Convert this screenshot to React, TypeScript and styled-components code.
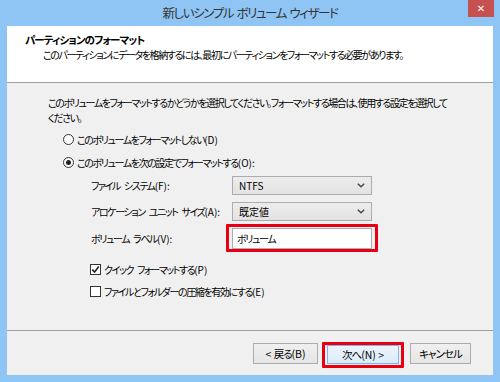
import React from 'react'
import styled, { createGlobalStyle } from 'styled-components'

const GlobalStyle = createGlobalStyle`
  html, body {
    margin: 0;
    padding: 0;
    background: #8fc5f4;
  }
  body {
    font-family: "Noto Sans CJK JP", "Noto Sans", sans-serif;
    font-feature-settings: "palt";
    font-size: 10px;
    letter-spacing: -1.4px;
    word-spacing: 3px;
    color: #000;
  }
`

const frameBlue = '#8fc5f4'

const ChevronIcon = () => (
  <svg width="8" height="5" viewBox="0 0 8 5">
    <path d="M0.8 0.8 L4 3.8 L7.2 0.8" fill="none" stroke="#444" strokeWidth="1.4" />
  </svg>
)

const CheckIcon = () => (
  <svg width="9" height="9" viewBox="0 0 9 9">
    <path d="M1.2 4.6 L3.6 7 L7.8 1.6" fill="none" stroke="#222" strokeWidth="1.6" />
  </svg>
)

const App: React.FC = () => {
  return (
    <>
      <GlobalStyle />
      <SWindow>
        <STitleBar>
          <span />
          <STitle>新しいシンプル ボリューム ウィザード</STitle>
          <SClose aria-label="閉じる">✕</SClose>
        </STitleBar>
        <SPanel>
          <SHeader>
            <h1 className="heading">パーティションのフォーマット</h1>
            <p className="sub">
              このパーティションにデータを格納するには、最初にパーティションをフォーマットする必要があります。
            </p>
          </SHeader>
          <SBody>
            <SIntro>
              このボリュームをフォーマットするかどうかを選択してください。フォーマットする場合は、使用する設定を選択して
              <br />
              ください。
            </SIntro>
            <SOption $gap={6}>
              <SRadio />
              <span>
                このボリュームをフォーマットしない<SKey>(D)</SKey>
              </span>
            </SOption>
            <SOption $gap={7}>
              <SRadio $checked />
              <span>
                このボリュームを次の設定でフォーマットする<SKey>(O):</SKey>
              </span>
            </SOption>
            <SField $gap={6}>
              <SLabel>
                ファイル システム<SKey>(F):</SKey>
              </SLabel>
              <SSelect>
                NTFS
                <ChevronIcon />
              </SSelect>
            </SField>
            <SField $gap={7}>
              <SLabel>
                アロケーション ユニット サイズ<SKey>(A):</SKey>
              </SLabel>
              <SSelect>
                既定値
                <ChevronIcon />
              </SSelect>
            </SField>
            <SField $gap={3}>
              <SLabel>
                ボリューム ラベル<SKey>(V):</SKey>
              </SLabel>
              <SMarkField>
                <SInput>ボリューム</SInput>
              </SMarkField>
            </SField>
            <SCheckRow $gap={9}>
              <SCheckBox>
                <CheckIcon />
              </SCheckBox>
              <span>
                クイック フォーマットする<SKey>(P)</SKey>
              </span>
            </SCheckRow>
            <SCheckRow $gap={6}>
              <SCheckBox />
              <span>
                ファイルとフォルダーの圧縮を有効にする<SKey>(E)</SKey>
              </span>
            </SCheckRow>
          </SBody>
          <SFooter>
            <SButton $width={65}>
              <SKey>&lt; </SKey>戻る<SKey>(B)</SKey>
            </SButton>
            <SMarkButton>
              <SButton $width={72} $primary $short>
                次へ<SKey>(N) &gt;</SKey>
              </SButton>
            </SMarkButton>
            <SButton $width={61}>キャンセル</SButton>
          </SFooter>
        </SPanel>
      </SWindow>
    </>
  )
}

const SWindow = styled.div`
  display: flex;
  flex-direction: column;
  width: 500px;
  height: 382px;
  background: ${frameBlue};
  box-sizing: border-box;
`

const STitleBar = styled.div`
  display: grid;
  grid-template-columns: 1fr auto 1fr;
  align-items: start;
  height: 26px;
`

const STitle = styled.div`
  padding-top: 4px;
  font-size: 12.5px;
  line-height: 18px;
  letter-spacing: -1.4px;
  word-spacing: 2px;
  color: #333;
`

const SClose = styled.div`
  justify-self: end;
  display: flex;
  align-items: center;
  justify-content: center;
  width: 26px;
  height: 17px;
  margin-right: 6px;
  background: #c75050;
  color: #fff;
  font-family: "DejaVu Sans", sans-serif;
  font-size: 10px;
  font-weight: bold;
  letter-spacing: 0;
`

const SKey = styled.span`
  letter-spacing: 0;
  word-spacing: 0;
`

const SPanel = styled.div`
  flex: 1;
  display: flex;
  flex-direction: column;
  margin: 0 7px 7px;
  background: #f0f0f0;
`

const SHeader = styled.div`
  height: 57px;
  padding: 7px 0 0 18px;
  box-sizing: border-box;
  background: #fff;
  border-bottom: 1px solid #a0a0a0;
  .heading {
    margin: 0;
    font-size: 10.5px;
    font-weight: bold;
    line-height: 14px;
    letter-spacing: -0.9px;
  }
  .sub {
    margin: 0;
    padding-left: 18px;
    line-height: 16px;
    white-space: nowrap;
  }
`

const SBody = styled.div`
  flex: 1;
  display: flex;
  flex-direction: column;
  padding: 12px 0 0 41px;
  border-bottom: 1px solid #a0a0a0;
`

const SIntro = styled.p`
  margin: 0;
  line-height: 15px;
  white-space: nowrap;
`

const SOption = styled.label<{ $gap: number }>`
  display: flex;
  align-items: center;
  gap: 3px;
  height: 16px;
  margin: ${p => p.$gap}px 0 0 15px;
`

const SRadio = styled.span<{ $checked?: boolean }>`
  position: relative;
  width: 11px;
  height: 11px;
  box-sizing: border-box;
  border: 1px solid #333;
  border-radius: 50%;
  background: #fff;
  &::after {
    content: '';
    display: ${p => (p.$checked ? 'block' : 'none')};
    position: absolute;
    left: 2px;
    top: 2px;
    width: 5px;
    height: 5px;
    border-radius: 50%;
    background: #222;
  }
`

const SField = styled.div<{ $gap: number }>`
  display: grid;
  grid-template-columns: 141px 140px;
  align-items: center;
  margin: ${p => p.$gap}px 0 0 43px;
`

const SLabel = styled.span`
  white-space: nowrap;
`

const SSelect = styled.div`
  display: flex;
  align-items: center;
  justify-content: space-between;
  height: 19px;
  padding: 0 6px 0 6px;
  box-sizing: border-box;
  border: 1px solid #acacac;
  background: linear-gradient(#ececec, #e3e3e3);
  letter-spacing: 0;
`

const SMarkField = styled.div`
  margin: 0 -6px;
  padding: 1px 3px 0;
  border: 3px solid #e60012;
  border-radius: 1px;
`

const SInput = styled.div`
  display: flex;
  align-items: center;
  height: 21px;
  padding-left: 4px;
  box-sizing: border-box;
  border: 1px solid #abadb3;
  background: #fff;
`

const SCheckRow = styled.label<{ $gap: number }>`
  display: flex;
  align-items: center;
  gap: 3px;
  height: 16px;
  margin: ${p => p.$gap}px 0 0 42px;
`

const SCheckBox = styled.span`
  display: flex;
  align-items: center;
  justify-content: center;
  width: 11px;
  height: 11px;
  box-sizing: border-box;
  border: 1px solid #333;
  background: #fff;
`

const SFooter = styled.div`
  display: flex;
  align-items: flex-start;
  justify-content: flex-end;
  height: 44px;
  padding: 12px 22px 0 0;
  box-sizing: border-box;
`

const SButton = styled.button<{ $width: number; $primary?: boolean; $short?: boolean }>`
  width: ${p => p.$width}px;
  height: ${p => (p.$short ? 19 : 21)}px;
  padding: 0;
  border: 1px solid ${p => (p.$primary ? '#7eb4ea' : '#acacac')};
  background: ${p => (p.$primary ? 'linear-gradient(#ecf4fc, #dcecfc)' : 'linear-gradient(#f0f0f0, #e5e5e5)')};
  font-family: inherit;
  font-feature-settings: "palt";
  font-size: 10.5px;
  letter-spacing: -1px;
  white-space: pre;
  color: #000;
`

const SMarkButton = styled.span`
  display: flex;
  margin: -1px 6px 0 4px;
  padding: 0 2px 1px;
  border: 3px solid #e60012;
  border-radius: 1px;
`

export default App
